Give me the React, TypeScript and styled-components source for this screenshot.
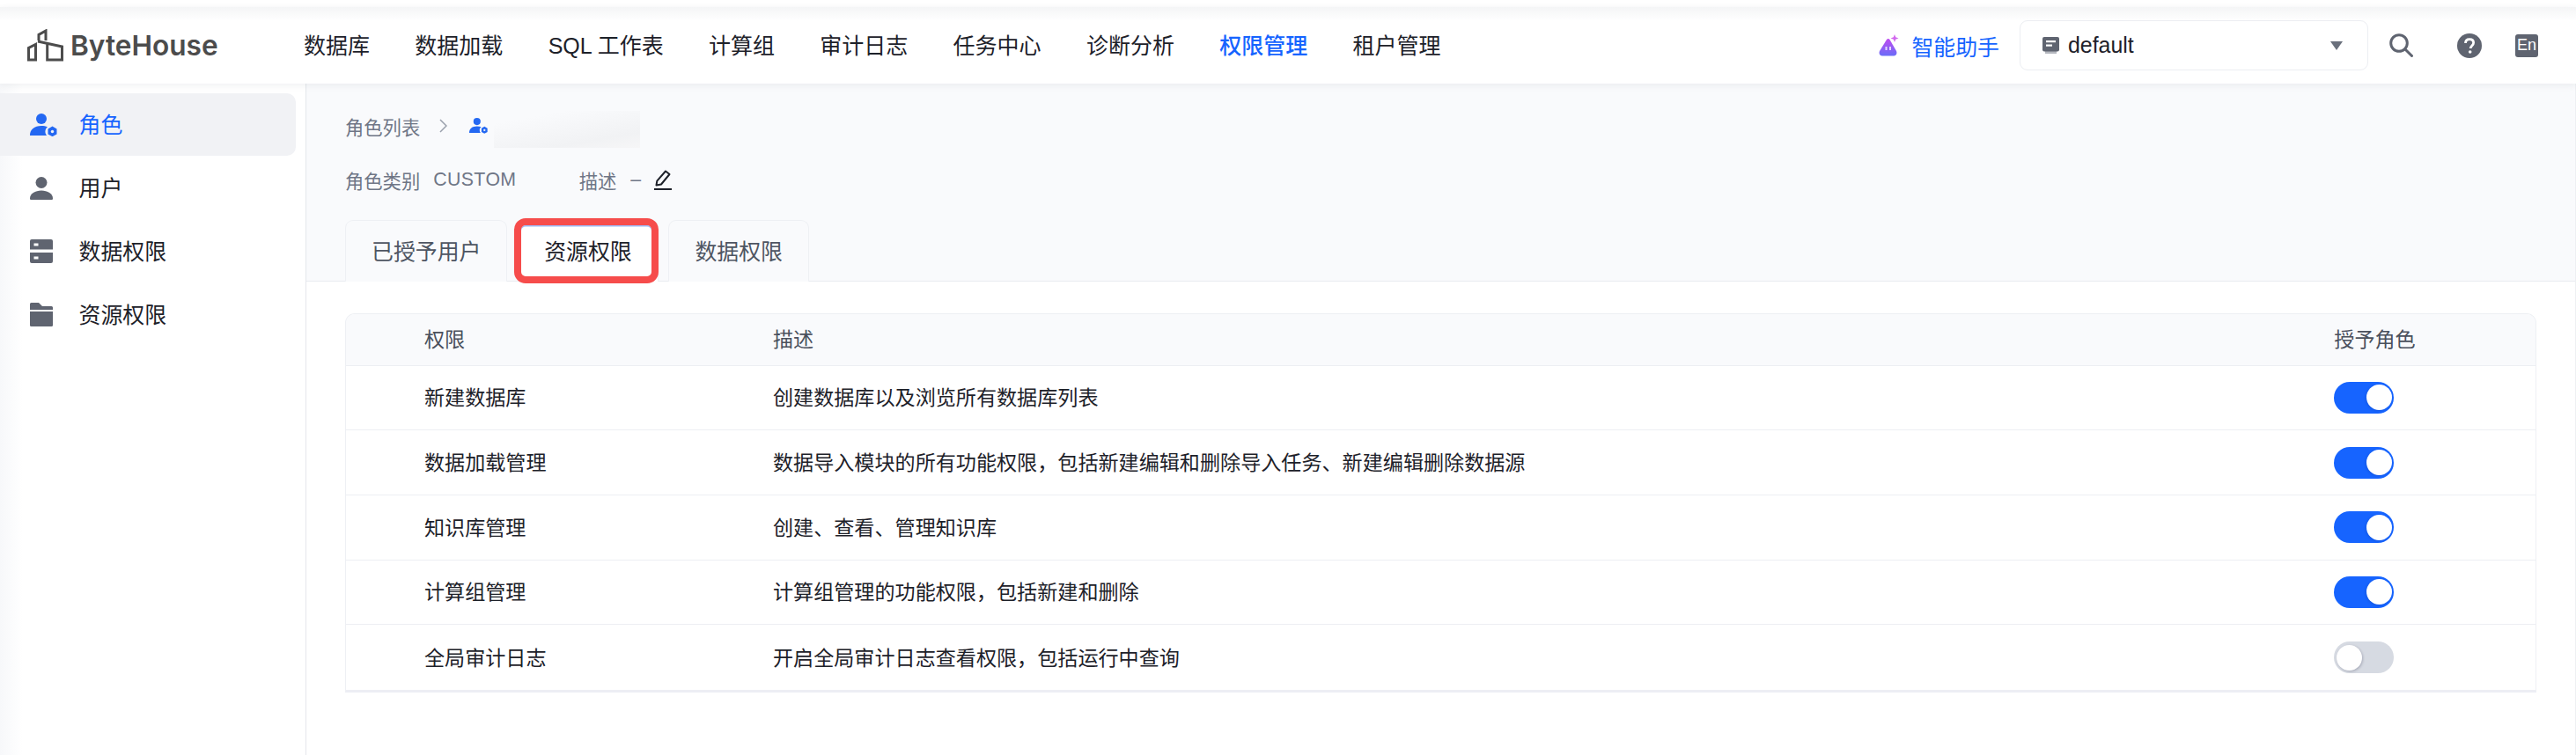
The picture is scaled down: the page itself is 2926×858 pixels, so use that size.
import React from "react";
import styled, { createGlobalStyle } from "styled-components";

const Global = createGlobalStyle`
  html, body { margin: 0; padding: 0; background: #fff; }
  body { font-family: "Liberation Sans", "Noto Sans CJK SC", sans-serif; }
  * { box-sizing: border-box; }
`;

const Page = styled.div`
  width: 2926px;
  height: 858px;
  overflow: hidden;
  display: flex;
  flex-direction: column;
  padding-top: 8px;
  background: #fff;
`;

const Header = styled.header`
  position: relative;
  z-index: 2;
  flex: none;
  height: 87px;
  display: flex;
  align-items: center;
  padding: 0 43px 0 31px;
  background: linear-gradient(180deg, #f4f5f6 0, #fff 16px), #fff;
  box-shadow: 0 2px 8px rgba(30, 40, 60, 0.07);
`;

const Logo = styled.div`
  display: flex;
  align-items: center;
  gap: 8px;
  width: 314px;
  flex: none;
`;

const LogoText = styled.span`
  font-family: Inter, sans-serif;
  font-weight: 600;
  font-size: 31.6px;
  color: #4c4c4c;
  line-height: 36px;
`;

const Nav = styled.nav`
  display: flex;
  gap: 51.3px;
`;

const NavItem = styled.a<{ $active?: boolean }>`
  font-size: 25px;
  line-height: 34px;
  white-space: nowrap;
  color: ${(p) => (p.$active ? "#1664ff" : "#1d2129")};
  font-weight: ${(p) => (p.$active ? 500 : 400)};
`;

const HeaderRight = styled.div`
  margin-left: auto;
  display: flex;
  align-items: center;
`;

const Assistant = styled.div`
  display: flex;
  align-items: center;
  gap: 14px;
  margin-right: 23px;
  font-size: 24.9px;
  color: #1664ff;
`;

const Select = styled.div`
  width: 396px;
  height: 57px;
  display: flex;
  align-items: center;
  padding: 0 28px 0 25px;
  gap: 10px;
  border: 1.5px solid #eceef2;
  border-radius: 9px;
  background: #fff;
  margin-right: 24px;
  font-size: 24.9px;
  color: #1d2129;
`;

const SelectText = styled.span`
  flex: 1;
`;

const Caret = styled.span`
  width: 0;
  height: 0;
  border-left: 7px solid transparent;
  border-right: 7px solid transparent;
  border-top: 10px solid #6a707c;
`;

const IconGap = styled.span<{ $w: number }>`
  display: inline-flex;
  margin-right: ${(p) => p.$w}px;
`;

const LangBadge = styled.span`
  width: 26px;
  height: 26px;
  border-radius: 3px;
  background: #5f6470;
  color: #fff;
  font-size: 18px;
  display: flex;
  align-items: center;
  justify-content: center;
`;

const Body = styled.div`
  flex: 1;
  display: flex;
  min-height: 0;
`;

const Sidebar = styled.aside`
  width: 348px;
  flex: none;
  padding: 11px 11px 0 0;
  display: flex;
  flex-direction: column;
  gap: 1px;
  border-right: 1.5px solid #e5e7ec;
  background: linear-gradient(90deg, #f7f8fa 0, #fff 26px);
`;

const SideItem = styled.div<{ $active?: boolean }>`
  height: 71px;
  display: flex;
  align-items: center;
  padding-left: 34px;
  border-radius: 0 10px 10px 0;
  font-size: 24.9px;
  color: ${(p) => (p.$active ? "#1664ff" : "#1d2129")};
  background: ${(p) => (p.$active ? "#f1f2f5" : "transparent")};
`;

const SideIcon = styled.span`
  width: 55.5px;
  flex: none;
  display: flex;
`;

const SideLabel = styled.span`
  padding-bottom: 3px;
`;

const Main = styled.main`
  flex: 1;
  min-width: 0;
  display: flex;
  flex-direction: column;
  border-right: 1px solid #eef0f3;
`;

const MainHead = styled.div`
  height: 225px;
  flex: none;
  padding: 31px 0 0 44px;
  background: #f9fafc;
  border-bottom: 1.5px solid #e9ebf0;
  display: flex;
  flex-direction: column;
`;

const Crumbs = styled.div`
  height: 34px;
  display: flex;
  align-items: center;
  font-size: 21.3px;
  color: #6f7686;
`;

const CrumbSep = styled.span`
  display: flex;
  margin: 0 25px 0 22px;
`;

const BlurBox = styled.span`
  width: 166px;
  height: 42px;
  margin-left: 7px;
  align-self: flex-start;
  background: linear-gradient(170deg, #f9fafc 20%, #f1f2f4 75%, #f6f6f7);
`;

const Meta = styled.div`
  height: 24px;
  margin-top: 32px;
  display: flex;
  align-items: center;
  font-size: 21.3px;
  color: #6f7686;
`;

const MetaValue = styled.span`
  margin-left: 15px;
  width: 165.5px;
  letter-spacing: 0.4px;
`;

const Dash = styled.span`
  margin-left: 16px;
  margin-right: 15px;
`;

const Tabs = styled.div`
  margin-top: 34px;
  height: 69.5px;
  display: flex;
  gap: 11.7px;
`;

const Tab = styled.div<{ $active?: boolean }>`
  position: relative;
  height: 69.5px;
  padding: 0 29px 3px;
  display: flex;
  align-items: center;
  font-size: 24.9px;
  white-space: nowrap;
  color: ${(p) => (p.$active ? "#1d2129" : "#4e5562")};
  background: ${(p) => (p.$active ? "#fff" : "#f9fafc")};
  border: 1.5px solid #eef0f4;
  border-bottom: 0;
  border-radius: 9px 9px 0 0;
`;

const Highlight = styled.span`
  position: absolute;
  left: -5px;
  right: -1px;
  top: -3px;
  bottom: -2px;
  border: 8px solid #f64c4b;
  border-radius: 13px;
  box-shadow: inset 0 1.5px 0 #9db9f5;
`;

const Content = styled.div`
  flex: 1;
  background: #fff;
  padding: 36px 44px 0 44px;
`;

const Table = styled.div`
  border: 1.5px solid #eef0f4;
  border-bottom: 3px solid #edeef4;
  border-radius: 11px 11px 0 0;
  overflow: hidden;
`;

const Row = styled.div<{ $head?: boolean }>`
  display: grid;
  grid-template-columns: 396px 1773.3px 1fr;
  align-items: center;
  padding-left: 89px;
  height: ${(p) => (p.$head ? "58.5px" : "73.7px")};
  font-size: 23.1px;
  color: ${(p) => (p.$head ? "#4a505c" : "#1d2129")};
  background: ${(p) => (p.$head ? "#f9fafc" : "#fff")};
  border-bottom: 1.5px solid #edeff3;
  &:last-child { border-bottom: 0; }
`;

const Cell = styled.span`
  padding-bottom: 3px;
`;

const Switch = styled.span<{ $on?: boolean }>`
  width: 67.5px;
  height: 36px;
  border-radius: 18px;
  display: flex;
  align-items: center;
  justify-content: ${(p) => (p.$on ? "flex-end" : "flex-start")};
  padding: 0 2px 0 3px;
  background: ${(p) => (p.$on ? "#1664ff" : "#d6dae2")};
`;

const Knob = styled.span<{ $on?: boolean }>`
  width: 29px;
  height: 29px;
  border-radius: 50%;
  background: #fff;
  box-shadow: ${(p) => (p.$on ? "-1px 1px 3px rgba(0,0,40,.12)" : "1px 1px 3px rgba(0,0,40,.22)")};
`;

const LogoIcon = () => (
  <svg width="41" height="37" viewBox="0 0 41 37" fill="none" stroke="#4c4c4c" strokeWidth="3">
    <path d="M1.5 35V21.5L9.5 17.5V35Z" />
    <path d="M13 13V6.5L21 2V13" />
    <path d="M12 14L39.5 20V35H22.7V15" />
  </svg>
);

const RoleIcon = ({ size = 31 }: { size?: number }) => (
  <svg width={size} height={(size * 26) / 31} viewBox="0 0 31 26" fill="#2468f2">
    <circle cx="13" cy="6" r="6" />
    <path d="M0 25c0-7 5-11 13-11 2.700 0 5 .4 7 1.300-1.500 1.200-2.600 3-2.600 5.200 0 1.800.6 3.400 1.700 4.500H0Z" />
    <path d="M25.500 14.500l5 3v6l-5 2.700-5-2.700v-6l5-3Z" />
    <circle cx="25.500" cy="20.500" r="1.700" fill="#f1f2f5" />
  </svg>
);

const UserIcon = () => (
  <svg width="26" height="26" viewBox="0 0 26 26" fill="#5f6470">
    <circle cx="13" cy="6.500" r="6.500" />
    <path d="M0 24.500C0 19 6 15.500 13 15.500S26 19 26 24.500c0 1-.6 1.500-1.500 1.500h-23C.6 26 0 25.500 0 24.500Z" />
  </svg>
);

const DbIcon = () => (
  <svg width="26" height="27" viewBox="0 0 26 27" fill="#5f6470">
    <path d="M2 0h22a2 2 0 0 1 2 2v9.500H0V2a2 2 0 0 1 2-2ZM4.500 4.500v3h5v-3h-5Z" fillRule="evenodd" />
    <path d="M0 15h26v10a2 2 0 0 1-2 2H2a2 2 0 0 1-2-2V15Zm4.500 4.500v3h5v-3h-5Z" fillRule="evenodd" />
  </svg>
);

const FolderIcon = () => (
  <svg width="26" height="27" viewBox="0 0 26 27" fill="#5f6470">
    <path d="M1.500 0h8.500l4 4h10.500A1.500 1.500 0 0 1 26 5.500V8H0V1.500A1.500 1.500 0 0 1 1.500 0Z" />
    <path d="M0 10h26v15.500a1.500 1.500 0 0 1-1.500 1.500h-23A1.500 1.500 0 0 1 0 25.500V10Z" />
  </svg>
);

const AssistantIcon = () => (
  <svg width="23" height="25" viewBox="0 0 23 25">
    <defs>
      <linearGradient id="asg" x1="0" y1="0" x2="0" y2="1">
        <stop offset="0" stopColor="#c04cf0" />
        <stop offset="1" stopColor="#6a6cf8" />
      </linearGradient>
    </defs>
    <path d="M9 6c1-1.500 2.500-1.500 3.500 0L20 19c1.300 3-.5 5.500-3 5.500H4C1.500 24.500-.3 22 1 19L9 6Z" fill="url(#asg)" />
    <rect x="7.500" y="14" width="2" height="4" fill="#fff" opacity=".75" />
    <rect x="12" y="14" width="2" height="4" fill="#fff" opacity=".75" />
    <path d="M18 0l1.200 3.300L22.500 4.500l-3.300 1.200L18 9l-1.200-3.300L13.500 4.500l3.300-1.200L18 0Z" fill="#d268ee" />
  </svg>
);

const ClusterIcon = () => (
  <svg width="19" height="19" viewBox="0 0 19 19">
    <path d="M3 16h13v3H3z" fill="#b4b7be" />
    <rect width="19" height="16.500" rx="2" fill="#5f6470" />
    <rect x="4" y="4" width="11" height="2.200" fill="#fff" />
    <rect x="4" y="8.500" width="7" height="2.200" fill="#fff" />
  </svg>
);

const SearchIcon = () => (
  <svg width="27" height="27" viewBox="0 0 27 27" fill="none" stroke="#5f6470" strokeWidth="3">
    <circle cx="11" cy="11" r="9.300" />
    <path d="M18 18l7.500 7.500" strokeLinecap="round" />
  </svg>
);

const HelpIcon = () => (
  <svg width="28" height="28" viewBox="0 0 28 28">
    <circle cx="14" cy="14" r="14" fill="#5f6470" />
    <path d="M9.500 11c0-2.800 2-4.300 4.600-4.300 2.700 0 4.500 1.600 4.500 3.900 0 3.500-3.400 3.400-3.400 6.400" fill="none" stroke="#fff" strokeWidth="2.800" />
    <circle cx="14.700" cy="21" r="1.800" fill="#fff" />
  </svg>
);

const Chevron = () => (
  <svg width="9" height="16" viewBox="0 0 9 16" fill="none" stroke="#9aa0ac" strokeWidth="1.500">
    <path d="M1 1l7 7-7 7" />
  </svg>
);

const PenIcon = () => (
  <svg width="20" height="23" viewBox="0 0 20 23" fill="none" stroke="#1d2129" strokeWidth="2">
    <path d="M13 1.500l4.500 3.500L8 16.500l-5.500 1 .8-4.800L13 1.500Z" strokeLinejoin="round" />
    <path d="M0 22h20" />
  </svg>
);

const navItems = ["数据库", "数据加载", "SQL 工作表", "计算组", "审计日志", "任务中心", "诊断分析", "权限管理", "租户管理"];

const rows = [
  { name: "新建数据库", desc: "创建数据库以及浏览所有数据库列表", on: true },
  { name: "数据加载管理", desc: "数据导入模块的所有功能权限，包括新建编辑和删除导入任务、新建编辑删除数据源", on: true },
  { name: "知识库管理", desc: "创建、查看、管理知识库", on: true },
  { name: "计算组管理", desc: "计算组管理的功能权限，包括新建和删除", on: true },
  { name: "全局审计日志", desc: "开启全局审计日志查看权限，包括运行中查询", on: false },
];

export default function App() {
  return (
    <Page>
      <Global />
      <Header>
        <Logo>
          <LogoIcon />
          <LogoText>ByteHouse</LogoText>
        </Logo>
        <Nav>
          {navItems.map((n) => (
            <NavItem key={n} $active={n === "权限管理"}>{n}</NavItem>
          ))}
        </Nav>
        <HeaderRight>
          <Assistant>
            <AssistantIcon />
            智能助手
          </Assistant>
          <Select>
            <ClusterIcon />
            <SelectText>default</SelectText>
            <Caret />
          </Select>
          <IconGap $w={50}><SearchIcon /></IconGap>
          <IconGap $w={38}><HelpIcon /></IconGap>
          <LangBadge>En</LangBadge>
        </HeaderRight>
      </Header>
      <Body>
        <Sidebar>
          <SideItem $active><SideIcon><RoleIcon /></SideIcon><SideLabel>角色</SideLabel></SideItem>
          <SideItem><SideIcon><UserIcon /></SideIcon><SideLabel>用户</SideLabel></SideItem>
          <SideItem><SideIcon><DbIcon /></SideIcon><SideLabel>数据权限</SideLabel></SideItem>
          <SideItem><SideIcon><FolderIcon /></SideIcon><SideLabel>资源权限</SideLabel></SideItem>
        </Sidebar>
        <Main>
          <MainHead>
            <Crumbs>
              角色列表
              <CrumbSep><Chevron /></CrumbSep>
              <RoleIcon size={21} />
              <BlurBox />
            </Crumbs>
            <Meta>
              角色类别
              <MetaValue>CUSTOM</MetaValue>
              描述
              <Dash>–</Dash>
              <PenIcon />
            </Meta>
            <Tabs>
              <Tab>已授予用户</Tab>
              <Tab $active>资源权限<Highlight /></Tab>
              <Tab>数据权限</Tab>
            </Tabs>
          </MainHead>
          <Content>
            <Table>
              <Row $head>
                <Cell>权限</Cell>
                <Cell>描述</Cell>
                <Cell>授予角色</Cell>
              </Row>
              {rows.map((r) => (
                <Row key={r.name}>
                  <Cell>{r.name}</Cell>
                  <Cell>{r.desc}</Cell>
                  <Switch $on={r.on}><Knob $on={r.on} /></Switch>
                </Row>
              ))}
            </Table>
          </Content>
        </Main>
      </Body>
    </Page>
  );
}
